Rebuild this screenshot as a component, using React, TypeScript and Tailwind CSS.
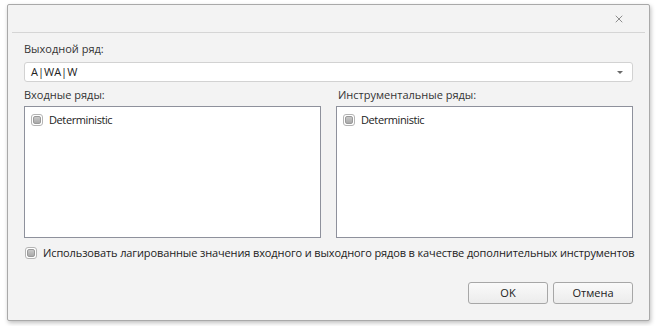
import { X } from 'lucide-react';

function Check() {
  return (
    <span className="inline-block w-[12px] h-[12px] shrink-0 rounded-[3px] border border-[#b4b4b4] bg-white p-[1px]">
      <span className="block w-full h-full rounded-[2px] bg-gradient-to-b from-[#c9c9c9] to-[#a9a9a9] border border-[#9a9a9a]" />
    </span>
  );
}

function ListBox() {
  return (
    <div className="h-[132px] border border-[#8e919c] bg-white px-[6px] pt-[5px]">
      <div className="flex items-center gap-[6px] leading-[16px]">
        <Check />
        <span className="tracking-[-0.4px]">Deterministic</span>
      </div>
    </div>
  );
}

export default function App() {
  return (
    <div className="w-[656px] h-[326px] bg-white pt-[4px] pl-[7px] font-['Open_Sans',sans-serif] text-[11px] text-[#222]">
      <div className="w-[643px] h-[317px] bg-[#f3f3f3] border border-[#a9a9a9] rounded-[2px] shadow-[1px_2px_4px_rgba(0,0,0,0.25)] flex flex-col">
        <div className="h-[28px] mx-[4px] border-b border-[#d5d5d5] flex items-center justify-end pr-[20px]">
          <X size={12} strokeWidth={1.5} className="text-[#6b6b6b]" />
        </div>
        <div className="pl-[16px] pr-[16px] pt-[8px] flex flex-col">
          <div className="leading-[16px] text-[#333]">Выходной ряд:</div>
          <div className="mt-[5px] h-[20px] rounded-[3px] border border-[#d2d2d2] bg-white flex items-center pl-[6px] pr-[9px] leading-[16px]">
            <span className="flex-1">A|WA|W</span>
            <svg width="6" height="3" viewBox="0 0 6 3"><path d="M0 0h6L3 3z" fill="#6a6a6a" /></svg>
          </div>
          <div className="mt-[5px] grid grid-cols-2 gap-[15px]">
            <div>
              <div className="leading-[16px] text-[#333]">Входные ряды:</div>
              <div className="mt-[3px]"><ListBox /></div>
            </div>
            <div>
              <div className="leading-[16px] text-[#333] pl-[2px]">Инструментальные ряды:</div>
              <div className="mt-[3px]"><ListBox /></div>
            </div>
          </div>
          <div className="mt-[7px] flex items-center gap-[6px] pl-[1px] leading-[16px]">
            <Check />
            <span className="whitespace-nowrap tracking-[-0.12px]">Использовать лагированные значения входного и выходного рядов в качестве дополнительных инструментов</span>
          </div>
          <div className="mt-[21px] flex justify-end gap-[5px]">
            <button className="w-[80px] h-[22px] rounded-[3px] border border-[#a7a7a7] bg-gradient-to-b from-[#fafafa] to-[#ececec] text-[#222]">OK</button>
            <button className="w-[80px] h-[22px] rounded-[3px] border border-[#a7a7a7] bg-gradient-to-b from-[#fafafa] to-[#ececec] text-[#222]">Отмена</button>
          </div>
        </div>
      </div>
    </div>
  );
}
